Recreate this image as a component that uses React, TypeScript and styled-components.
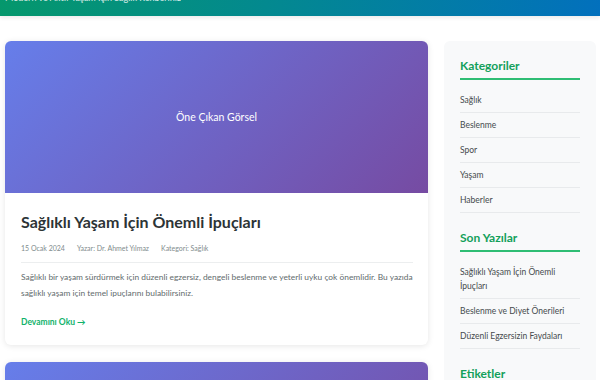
import React from 'react';
import styled, { createGlobalStyle } from 'styled-components';

const GlobalStyle = createGlobalStyle`
  * { box-sizing: border-box; }
  html, body { margin: 0; padding: 0; background: #ffffff; overflow: hidden; }
  body {
    font-family: Lato, 'Open Sans', 'Liberation Sans', sans-serif;
    color: #333;
  }
`;

const Header = styled.header`
  margin-top: -44px;
  padding: 14px 5px 13px;
  background: linear-gradient(100deg, #05986b 0%, #03898f 45%, #0270bd 100%);
  color: #fff;
  box-shadow: 0 2px 4px rgba(0, 0, 0, 0.08);
`;

const SiteTitle = styled.div`
  font-size: 16px;
  font-weight: 700;
  line-height: 22px;
`;

const Tagline = styled.div`
  font-size: 9px;
  line-height: 11px;
  opacity: 0.85;
`;

const Layout = styled.div`
  display: grid;
  grid-template-columns: 423px 152px;
  gap: 16px;
  padding: 25px 4px 0 5px;
`;

const Posts = styled.main`
  display: flex;
  flex-direction: column;
  gap: 17px;
`;

const Card = styled.article`
  background: #fff;
  border-radius: 6px;
  overflow: hidden;
  box-shadow: 0 1px 6px rgba(0, 0, 0, 0.1);
`;

const Cover = styled.div`
  height: 152px;
  display: flex;
  align-items: center;
  justify-content: center;
  background: linear-gradient(135deg, #667eea 0%, #764ba2 100%);
  color: #fff;
  font-size: 10.5px;
`;

const CardBody = styled.div`
  padding: 17px 15px 17px 16px;
`;

const Title = styled.h2`
  margin: 0 0 9px;
  font-size: 16px;
  font-weight: 700;
  line-height: 24px;
  color: #2d3436;
`;

const Meta = styled.div`
  display: flex;
  gap: 12px;
  padding-bottom: 8px;
  border-bottom: 1px solid #eceeef;
  font-size: 7px;
  line-height: 11px;
  color: #7f8c8d;
`;

const Excerpt = styled.p`
  margin: 6px 0 8px;
  font-size: 8.4px;
  line-height: 16px;
  color: #5f6b6d;
`;

const ReadMore = styled.a`
  font-size: 8.5px;
  font-weight: 700;
  line-height: 12px;
  color: #10b26a;
  text-decoration: none;
`;

const Sidebar = styled.aside`
  background: #f8f9fa;
  border-radius: 6px;
  padding: 17px 16px;
  align-self: start;
  min-height: 400px;
`;

const Widget = styled.section`
  margin-bottom: 17px;
`;

const WidgetTitle = styled.h3`
  margin: 0 0 8px;
  padding-bottom: 4px;
  border-bottom: 2px solid #2ebd74;
  font-size: 12px;
  font-weight: 700;
  line-height: 16px;
  color: #13a05a;
`;

const List = styled.ul`
  list-style: none;
  margin: 0;
  padding: 0;
`;

const Item = styled.li`
  padding: 5px 0;
  border-bottom: 1px solid #e8eaec;
  font-size: 8.5px;
  line-height: 14px;
  color: #454a4d;
`;

const categories = ['Sağlık', 'Beslenme', 'Spor', 'Yaşam', 'Haberler'];
const recent = [
  'Sağlıklı Yaşam İçin Önemli İpuçları',
  'Beslenme ve Diyet Önerileri',
  'Düzenli Egzersizin Faydaları',
];

const posts = [
  {
    title: 'Sağlıklı Yaşam İçin Önemli İpuçları',
    date: '15 Ocak 2024',
    author: 'Dr. Ahmet Yılmaz',
    category: 'Sağlık',
    excerpt:
      'Sağlıklı bir yaşam sürdürmek için düzenli egzersiz, dengeli beslenme ve yeterli uyku çok önemlidir. Bu yazıda sağlıklı yaşam için temel ipuçlarını bulabilirsiniz.',
  },
  {
    title: 'Beslenme ve Diyet Önerileri',
    date: '12 Ocak 2024',
    author: 'Dyt. Ayşe Demir',
    category: 'Beslenme',
    excerpt:
      'Dengeli beslenme, sağlıklı bir yaşamın temel taşıdır. Günlük beslenme alışkanlıklarınızı iyileştirmek için önerilerimize göz atın.',
  },
];

function App() {
  return (
    <>
      <GlobalStyle />
      <Header>
        <SiteTitle>Sağlık Rehberi</SiteTitle>
        <Tagline>Modern ve Aktif Yaşam İçin Sağlık Rehberiniz</Tagline>
      </Header>
      <Layout>
        <Posts>
          {posts.map((post) => (
            <Card key={post.title}>
              <Cover>Öne Çıkan Görsel</Cover>
              <CardBody>
                <Title>{post.title}</Title>
                <Meta>
                  <span>{post.date}</span>
                  <span>Yazar: {post.author}</span>
                  <span>Kategori: {post.category}</span>
                </Meta>
                <Excerpt>{post.excerpt}</Excerpt>
                <ReadMore href="#">Devamını Oku →</ReadMore>
              </CardBody>
            </Card>
          ))}
        </Posts>
        <Sidebar>
          <Widget>
            <WidgetTitle>Kategoriler</WidgetTitle>
            <List>
              {categories.map((c) => (
                <Item key={c}>{c}</Item>
              ))}
            </List>
          </Widget>
          <Widget>
            <WidgetTitle>Son Yazılar</WidgetTitle>
            <List>
              {recent.map((r) => (
                <Item key={r}>{r}</Item>
              ))}
            </List>
          </Widget>
          <Widget>
            <WidgetTitle>Etiketler</WidgetTitle>
          </Widget>
        </Sidebar>
      </Layout>
    </>
  );
}

export default App;
